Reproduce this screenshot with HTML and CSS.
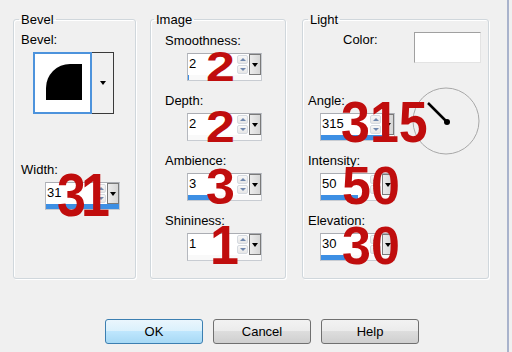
FILE: index.html
```html
<!DOCTYPE html>
<html lang="en">
<head>
    <meta charset="UTF-8">
    <title>Inner Bevel</title>
    <link rel="stylesheet" href="styles.css">
</head>
<body>
    <div class="dialog">
        <div class="groups">
            <!-- Bevel -->
            <fieldset class="group group-bevel">
                <legend>Bevel</legend>
                <div class="label">Bevel:</div>
                <div class="bevel-pick">
                    <div class="bevel-swatch">
                        <svg width="55" height="58" viewBox="0 0 55 58">
                            <path d="M11 46 V34 A24 24 0 0 1 35 10 H47 V46 Z" fill="#000"/>
                        </svg>
                    </div>
                    <div class="bevel-drop"><span class="caret"></span></div>
                </div>
                <div class="field field-width">
                    <div class="label">Width:</div>
                    <div class="spin">
                        <div class="spin-top">
                            <span class="spin-value">31</span>
                            <span class="spin-arrows"><i class="up"></i><i class="down"></i></span>
                            <span class="spin-drop"><span class="caret"></span></span>
                        </div>
                        <div class="spin-track"><div class="spin-fill" style="width: 100%"></div></div>
                        <span class="mark mark-31">31</span>
                    </div>
                </div>
            </fieldset>

            <!-- Image -->
            <fieldset class="group group-image">
                <legend>Image</legend>
                <div class="field">
                    <div class="label">Smoothness:</div>
                    <div class="spin">
                        <div class="spin-top">
                            <span class="spin-value">2</span>
                            <span class="spin-arrows"><i class="up"></i><i class="down"></i></span>
                            <span class="spin-drop"><span class="caret"></span></span>
                        </div>
                        <div class="spin-track"><div class="spin-fill" style="width: 2%"></div></div>
                        <span class="mark mark-smooth">2</span>
                    </div>
                </div>
                <div class="field">
                    <div class="label">Depth:</div>
                    <div class="spin">
                        <div class="spin-top">
                            <span class="spin-value">2</span>
                            <span class="spin-arrows"><i class="up"></i><i class="down"></i></span>
                            <span class="spin-drop"><span class="caret"></span></span>
                        </div>
                        <div class="spin-track"><div class="spin-fill" style="width: 0%"></div></div>
                        <span class="mark mark-depth">2</span>
                    </div>
                </div>
                <div class="field">
                    <div class="label">Ambience:</div>
                    <div class="spin">
                        <div class="spin-top">
                            <span class="spin-value">3</span>
                            <span class="spin-arrows"><i class="up"></i><i class="down"></i></span>
                            <span class="spin-drop"><span class="caret"></span></span>
                        </div>
                        <div class="spin-track"><div class="spin-fill" style="width: 34%"></div></div>
                        <span class="mark mark-amb">3</span>
                    </div>
                </div>
                <div class="field">
                    <div class="label">Shininess:</div>
                    <div class="spin">
                        <div class="spin-top">
                            <span class="spin-value">1</span>
                            <span class="spin-arrows"><i class="up"></i><i class="down"></i></span>
                            <span class="spin-drop"><span class="caret"></span></span>
                        </div>
                        <div class="spin-track"><div class="spin-fill" style="width: 0%"></div></div>
                        <span class="mark mark-shine">1</span>
                    </div>
                </div>
            </fieldset>

            <!-- Light -->
            <fieldset class="group group-light">
                <legend>Light</legend>
                <div class="color-row">
                    <span class="label">Color:</span>
                    <span class="color-swatch"></span>
                </div>
                <div class="angle-row">
                    <div class="field">
                        <div class="label">Angle:</div>
                        <div class="spin">
                            <div class="spin-top">
                                <span class="spin-value">315</span>
                                <span class="spin-arrows"><i class="up"></i><i class="down"></i></span>
                                <span class="spin-drop"><span class="caret"></span></span>
                            </div>
                            <div class="spin-track"><div class="spin-fill" style="width: 88%"></div></div>
                            <span class="mark mark-315">315</span>
                        </div>
                    </div>
                    <svg class="dial" width="70" height="70" viewBox="0 0 70 70">
                        <circle cx="35" cy="35" r="33" fill="none" stroke="#a8a8a8" stroke-width="1"/>
                        <line x1="17" y1="17" x2="36" y2="36" stroke="#000" stroke-width="2.5"/>
                        <circle cx="36" cy="36" r="3" fill="#000"/>
                    </svg>
                </div>
                <div class="field">
                    <div class="label">Intensity:</div>
                    <div class="spin">
                        <div class="spin-top">
                            <span class="spin-value">50</span>
                            <span class="spin-arrows"><i class="up"></i><i class="down"></i></span>
                            <span class="spin-drop"><span class="caret"></span></span>
                        </div>
                        <div class="spin-track"><div class="spin-fill" style="width: 50%"></div></div>
                        <span class="mark mark-50">50</span>
                    </div>
                </div>
                <div class="field">
                    <div class="label">Elevation:</div>
                    <div class="spin">
                        <div class="spin-top">
                            <span class="spin-value">30</span>
                            <span class="spin-arrows"><i class="up"></i><i class="down"></i></span>
                            <span class="spin-drop"><span class="caret"></span></span>
                        </div>
                        <div class="spin-track"><div class="spin-fill" style="width: 33%"></div></div>
                        <span class="mark mark-30">30</span>
                    </div>
                </div>
            </fieldset>
        </div>

        <div class="buttons">
            <button class="btn btn-default">OK</button>
            <button class="btn">Cancel</button>
            <button class="btn">Help</button>
        </div>
    </div>
    <div class="edge"></div>
</body>
</html>
```

FILE: styles.css
```css
/* Stile generale */
body {
    margin: 0;
    width: 512px;
    height: 352px;
    overflow: hidden;
    display: flex;
    background: #f0f0f0;
    font-family: "Liberation Sans", Arial, sans-serif;
    font-size: 13px;
    line-height: 15px;
    color: #000;
}

.dialog {
    width: 507px;
}

.edge {
    width: 2px;
    height: 352px;
    background: #a9b3cc;
}

/* Gruppi */
.groups {
    display: flex;
    margin: 12px 0 0 13px;
}

.group {
    margin: 0;
    padding: 5px 0 0 0;
    height: 267px;
    box-sizing: border-box;
    border: 1px solid #d0d7dc;
    border-radius: 3px;
    box-shadow: inset 1px 1px 0 #fff, 1px 1px 0 #fff;
    min-width: 0;
}

.group legend {
    padding: 0 2px;
    line-height: 15px;
}

.group-bevel {
    width: 123px;
    margin-right: 14px;
    padding-left: 7px;
}

.group-bevel legend {
    margin-left: -2px;
}

.group-image {
    width: 136px;
    margin-right: 16px;
    padding-left: 14px;
    padding-top: 6px;
}

.group-image legend {
    margin-left: -11px;
}

.group-light {
    width: 187px;
    padding-left: 5px;
    padding-right: 7px;
}

.group-light legend {
    margin-left: 0;
}

.label {
    display: block;
    height: 15px;
}

.field {
    margin-bottom: 12px;
}

.field .label {
    margin-bottom: 5px;
}

/* Anteprima bevel */
.bevel-pick {
    display: flex;
    width: 81px;
    height: 62px;
    margin: 5px 0 0 12px;
}

.bevel-swatch {
    width: 59px;
    box-sizing: border-box;
    border: 2px solid #4d93dc;
    background: #fff;
}

.bevel-swatch svg {
    display: block;
}

.bevel-drop {
    flex: 1;
    display: flex;
    align-items: center;
    justify-content: center;
    border: 1px solid #3a3a3a;
    border-left: none;
    background: #f0f0f0;
}

.caret {
    width: 0;
    height: 0;
    border-left: 3px solid transparent;
    border-right: 3px solid transparent;
    border-top: 4px solid #000;
}

.field-width {
    margin-top: 48px;
}

.field-width .spin {
    margin-left: 24px;
}

/* Spin box */
.spin {
    position: relative;
    width: 75px;
    height: 28px;
    box-sizing: border-box;
    border: 1px solid #c8ccd2;
    border-top-color: #abadb3;
    border-left-color: #b5b8be;
    background: #f9f9f9;
    margin-left: 22px;
}

.group-light .spin {
    margin-left: 12px;
}

.spin-top {
    display: flex;
    height: 21px;
    background: #fff;
}

.spin-value {
    flex: 1;
    padding: 2px 0 0 1px;
}

.spin-arrows {
    width: 11px;
    display: flex;
    flex-direction: column;
    gap: 1px;
    padding: 1px 1px 1px 0;
}

.spin-arrows i {
    flex: 1;
    display: flex;
    align-items: center;
    justify-content: center;
    border: 1px solid #d6dae0;
    border-radius: 2px;
    background: linear-gradient(#f8f8f8, #e6e6e6);
}

.spin-arrows .up::after,
.spin-arrows .down::after {
    content: '';
    border-left: 3px solid transparent;
    border-right: 3px solid transparent;
}

.spin-arrows .up::after {
    border-bottom: 3px solid #7088ae;
}

.spin-arrows .down::after {
    border-top: 3px solid #7088ae;
}

.spin-drop {
    width: 12px;
    display: flex;
    align-items: center;
    justify-content: center;
    box-sizing: border-box;
    border: 1px solid #7a7a7a;
    background: linear-gradient(90deg, #ececec, #d6d6d6);
}

.spin-track {
    height: 5px;
}

.spin-fill {
    height: 100%;
    background: #3d8fe4;
}

/* Numeri rossi sovrapposti */
.mark {
    position: absolute;
    z-index: 1;
    font-size: 52px;
    line-height: 52px;
    font-weight: bold;
    color: #c00d0d;
    transform-origin: 0 44px;
    white-space: nowrap;
}

.mark-31 { top: -11px; left: 11px; letter-spacing: -5px; transform: scaleY(1.16); }
.mark-smooth { top: -17px; left: 18px; transform: scaleY(0.8); }
.mark-depth { top: -16px; left: 18px; transform: scaleY(0.85); }
.mark-amb { top: -14px; left: 18px; transform: scaleY(0.95); }
.mark-shine { top: -14px; left: 22px; transform: scaleY(1.08); }
.mark-315 { top: -16px; left: 20px; transform: scaleY(1.1); }
.mark-50 { top: -14px; left: 21px; transform: scaleY(1.03); }
.mark-30 { top: -14px; left: 21px; transform: scaleY(1.03); }

/* Luce */
.color-row {
    display: flex;
    align-items: flex-start;
    height: 31px;
}

.color-row .label {
    margin-left: 35px;
}

.color-swatch {
    margin-left: auto;
    width: 67px;
    height: 31px;
    box-sizing: border-box;
    background: #fff;
    border: 1px solid #e3e3e3;
    border-top-color: #a0a0a0;
    border-left-color: #a0a0a0;
}

.angle-row {
    display: flex;
    align-items: flex-start;
    margin-top: 30px;
}

.dial {
    margin: -7px 0 -20px 16px;
}

/* Pulsanti */
.buttons {
    display: flex;
    gap: 10px;
    margin: 40px 0 0 105px;
}

.btn {
    width: 98px;
    height: 25px;
    padding: 0;
    border: 1px solid #707070;
    border-radius: 3px;
    background: linear-gradient(#f2f2f2 0, #ebebeb 50%, #dddddd 50%, #cfcfcf 100%);
    font-family: "Liberation Sans", Arial, sans-serif;
    font-size: 13px;
    color: #000;
}

.btn-default {
    border-color: #3c7fb1;
    background: linear-gradient(#eaf6fd 0, #d9f0fc 50%, #bee6fd 50%, #a7d9f5 100%);
}
```
